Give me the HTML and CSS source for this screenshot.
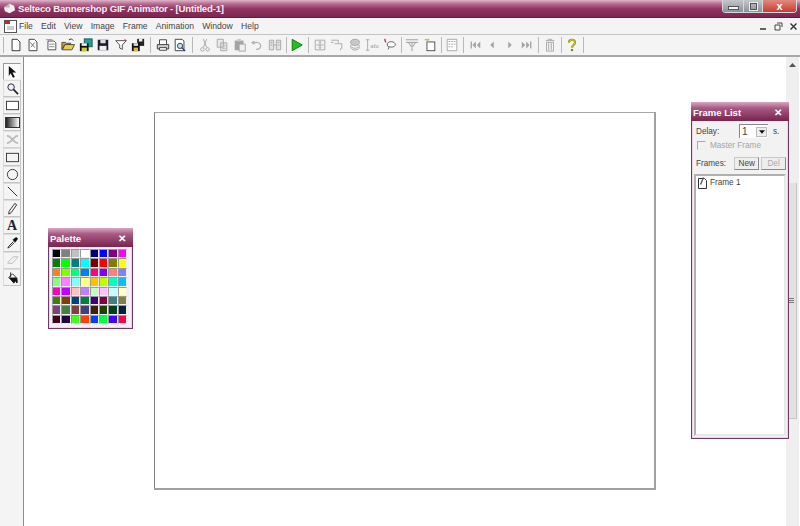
FILE: index.html
```html
<!DOCTYPE html>
<html lang="en">
<head>
  <meta charset="UTF-8" />
  <title>Selteco Bannershop GIF Animator - [Untitled-1]</title>
  <link rel="stylesheet" href="styles.css">
</head>
<body>
<div class="app">

  <div class="titlebar">
    <svg class="app-icon" viewBox="0 0 14 14"><path d="M1 6 L7 2 L12 4 L13 9 L7 12 L2 10 Z" fill="#f4eef0"/><path d="M1 6 L7 2 L7 6 Z" fill="#b9b2b6"/></svg>
    <span class="title-text">Selteco Bannershop GIF Animator - [Untitled-1]</span>
    <div class="win-controls">
      <div class="win-btn win-min"><span class="min-glyph"></span></div>
      <div class="win-btn win-max"><span class="max-glyph"></span></div>
      <div class="win-btn win-close">x</div>
    </div>
  </div>

  <div class="menubar">
    <svg class="doc-icon" viewBox="0 0 15 15"><rect x="1.5" y="1.5" width="12" height="12" fill="#fff" stroke="#555"/><rect x="2" y="2" width="5" height="3" fill="#c22"/><path d="M4 8h7M4 10h7" stroke="#999"/></svg>
    <span class="menu-item">File</span>
    <span class="menu-item">Edit</span>
    <span class="menu-item">View</span>
    <span class="menu-item">Image</span>
    <span class="menu-item">Frame</span>
    <span class="menu-item">Animation</span>
    <span class="menu-item">Window</span>
    <span class="menu-item">Help</span>
    <div class="mdi-controls">
      <svg viewBox="0 0 9 9"><path d="M1 7h6" stroke="#333" stroke-width="1.5"/></svg>
      <svg viewBox="0 0 9 9"><path d="M3 1h5v4M1 3h5v5H1z" fill="none" stroke="#444"/></svg>
      <svg viewBox="0 0 9 9"><path d="M1.5 1.5l6 6M7.5 1.5l-6 6" stroke="#333" stroke-width="1.4"/></svg>
    </div>
  </div>

  <div class="toolbar">
    <span class="sep"></span>
    <span class="tb"><svg viewBox="0 0 16 16"><path d="M3.5 1.5h6l3 3v10h-9z" fill="#fff" stroke="#222"/></svg></span>
    <span class="tb"><svg viewBox="0 0 16 16"><path d="M3.5 1.5h6l3 3v10h-9z" fill="#fff" stroke="#333"/><path d="M5 5l5 6M10 5l-4 5" stroke="#666"/></svg></span>
    <span class="tb"><svg viewBox="0 0 16 16"><path d="M4.5 3.5h7l2 2v8h-9z" fill="#fff" stroke="#444"/><path d="M2.5 2h7M6 7h6M6 10h6" stroke="#777"/></svg></span>
    <span class="tb"><svg viewBox="0 0 16 16"><path d="M1 13V5h4l1 1h5v2H4l-3 5z" fill="#c9a227" stroke="#443"/><path d="M1.5 13.5l3-6h11l-3 6z" fill="#e8cc4a" stroke="#443"/><path d="M9 2l3-1 2 2" fill="none" stroke="#222"/></svg></span>
    <span class="tb"><svg viewBox="0 0 16 16"><rect x="6" y="1" width="9" height="9" fill="#22a090" stroke="#155"/><rect x="1" y="6" width="10" height="9" fill="#111"/><rect x="3" y="6" width="6" height="3" fill="#eee"/><rect x="3" y="11" width="6" height="4" fill="#cc3"/></svg></span>
    <span class="tb"><svg viewBox="0 0 16 16"><rect x="2" y="2" width="12" height="12" fill="#1b1b33"/><rect x="5" y="2" width="6" height="4" fill="#ddd"/><rect x="4" y="9" width="8" height="5" fill="#eee"/></svg></span>
    <span class="tb"><svg viewBox="0 0 16 16"><path d="M2 3h12L9.5 8v5l-3-1.5V8z" fill="#fff" stroke="#444"/><path d="M12 1l2 2" stroke="#c33"/></svg></span>
    <span class="tb"><svg viewBox="0 0 16 16"><rect x="7" y="1" width="8" height="8" fill="#222"/><rect x="9" y="1" width="4" height="3" fill="#eee"/><rect x="1" y="6" width="9" height="9" fill="#111"/><rect x="3" y="6" width="5" height="3" fill="#ddd"/><rect x="3" y="11" width="5" height="4" fill="#db3"/></svg></span>
    <span class="sep"></span>
    <span class="tb"><svg viewBox="0 0 16 16"><path d="M4 7V2h8v5" fill="#fff" stroke="#333"/><path d="M1.5 7.5h13v5h-13z" fill="#ccc" stroke="#333"/><path d="M4 11h8v3H4z" fill="#fff" stroke="#333"/></svg></span>
    <span class="tb"><svg viewBox="0 0 16 16"><path d="M2.5 1.5h8l2 2v11h-10z" fill="#fff" stroke="#333"/><circle cx="8" cy="9" r="3" fill="#bfe3ea" stroke="#235"/><path d="M10 11l4 4" stroke="#235" stroke-width="1.5"/></svg></span>
    <span class="sep"></span>
    <span class="tb dim"><svg viewBox="0 0 16 16"><circle cx="5" cy="13" r="2" fill="none" stroke="#888"/><circle cx="11" cy="13" r="2" fill="none" stroke="#888"/><path d="M6 11l4-10M10 11L6 1" stroke="#888"/></svg></span>
    <span class="tb dim"><svg viewBox="0 0 16 16"><path d="M2.5 1.5h7v9h-7zM6.5 5.5h7v9h-7z" fill="#e4e4e4" stroke="#888"/><path d="M8 8h4M8 10h4M8 12h4" stroke="#aaa"/></svg></span>
    <span class="tb dim"><svg viewBox="0 0 16 16"><rect x="2" y="3" width="10" height="11" fill="#888"/><rect x="5" y="1" width="4" height="3" fill="#bbb"/><rect x="7" y="7" width="7" height="8" fill="#eee" stroke="#888"/></svg></span>
    <span class="tb dim"><svg viewBox="0 0 16 16"><path d="M4 6a5 4 0 1 1 3 7" fill="none" stroke="#999" stroke-width="1.3"/><path d="M1 5l4-2v5z" fill="#999"/></svg></span>
    <span class="tb dim"><svg viewBox="0 0 16 16"><path d="M1.5 2.5h5v11h-5zM9.5 2.5h5v11h-5z" fill="#ddd" stroke="#888"/><path d="M3 5h2M3 8h2M11 5h2M11 8h2M7 8h2" stroke="#777"/></svg></span>
    <span class="sep tight"></span>
    <span class="tb"><svg viewBox="0 0 16 16"><path d="M2.5 1.5L14 8 2.5 14.5z" fill="#1dc41d" stroke="#0a6f0a"/></svg></span>
    <span class="sep tight"></span>
    <span class="tb dim"><svg viewBox="0 0 16 16"><path d="M2.5 2.5h11v11h-11z" fill="#f2f2f2" stroke="#888"/><path d="M8 4v8M4 8h8M6.5 5.5L8 4l1.5 1.5M6.5 10.5L8 12l1.5-1.5" fill="none" stroke="#888"/></svg></span>
    <span class="tb dim"><svg viewBox="0 0 16 16"><path d="M1.5 2.5h8v3M5.5 6.5h8v6M1 5h3M12 14v-2" fill="none" stroke="#888"/></svg></span>
    <span class="tb dim"><svg viewBox="0 0 16 16"><ellipse cx="8" cy="5" rx="5" ry="3.5" fill="#bbb" stroke="#888"/><path d="M3 8c0 5 10 5 10 0M3 10c0 5 10 5 10 0" fill="none" stroke="#888"/></svg></span>
    <span class="tb dim"><svg viewBox="0 0 16 16"><path d="M1 2h4M3 2v12M1 14h4" stroke="#888" fill="none"/><text x="6" y="11" class="abc">abc</text></svg></span>
    <span class="tb"><svg viewBox="0 0 16 16"><path d="M5 6c2-3 9-2 9 1.5S8 11 5 9z" fill="#fff" stroke="#555"/><path d="M7 10l-1 3" stroke="#555"/><path d="M2 1l1 4" stroke="#c22" stroke-width="1.5"/></svg></span>
    <span class="sep tight"></span>
    <span class="tb dim"><svg viewBox="0 0 16 16"><path d="M1 2h14M1 5h14M8 5v10M4 5l3 5M12 5l-3 5" fill="none" stroke="#777"/></svg></span>
    <span class="tb"><svg viewBox="0 0 16 16"><rect x="4.5" y="4.5" width="9" height="10" fill="#fff" stroke="#444"/><path d="M2 2h5" stroke="#888"/><path d="M4 1l2 3M7 1L4 4" stroke="#c8c83c" stroke-width="1.5"/></svg></span>
    <span class="sep tight"></span>
    <span class="tb dim"><svg viewBox="0 0 16 16"><path d="M2.5 1.5h11v13h-11z" fill="#fff" stroke="#888"/><path d="M4 4h8M4 7h8M4 10h5" stroke="#888" stroke-dasharray="2 1"/></svg></span>
    <span class="sep tight"></span>
    <span class="tb dim"><svg viewBox="0 0 16 16"><path d="M3 4h1.5v8H3zM9 4v8L5 8zM14 4v8l-4-4z" fill="#888"/></svg></span>
    <span class="tb dim"><svg viewBox="0 0 16 16"><path d="M10 4v8L6 8z" fill="#888"/></svg></span>
    <span class="tb dim"><svg viewBox="0 0 16 16"><path d="M6 4v8l4-4z" fill="#888"/></svg></span>
    <span class="tb dim"><svg viewBox="0 0 16 16"><path d="M13 4h-1.5v8H13zM7 4v8l4-4zM2 4v8l4-4z" fill="#888"/></svg></span>
    <span class="sep tight"></span>
    <span class="tb dim"><svg viewBox="0 0 16 16"><path d="M3 3h10M6 3V1.5h4V3M4 5h8v10H4zM6.5 6v8M9.5 6v8" fill="none" stroke="#888"/></svg></span>
    <span class="sep tight"></span>
    <span class="tb"><svg viewBox="0 0 16 16"><path d="M4.5 5.5C4.5 1 11.5 1 11.5 5c0 3-3.5 3-3.5 6" fill="none" stroke="#8a8a10" stroke-width="2.4"/><path d="M4.5 5.5C4.5 1 11.5 1 11.5 5c0 3-3.5 3-3.5 6" fill="none" stroke="#e8e020" stroke-width="1"/><rect x="6.7" y="12.5" width="2.6" height="2.5" fill="#8a8a10"/></svg></span>
    <span class="sep tight"></span>
  </div>

  <div class="workspace">
    <div class="toolbox">
      <span class="tool pressed"><svg viewBox="0 0 14 14"><path d="M3 1l8 7H7l2.5 5-2 .7L5 9l-2 3z" fill="#111"/></svg></span>
      <span class="tool"><svg viewBox="0 0 14 14"><circle cx="5.5" cy="5.5" r="3.5" fill="#eef" stroke="#222"/><path d="M8 8l5 5" stroke="#222" stroke-width="1.8"/></svg></span>
      <span class="tool"><svg viewBox="0 0 14 14"><rect x=".5" y="2.5" width="13" height="9" fill="#fff" stroke="#333"/></svg></span>
      <span class="tool"><span class="grad-box"></span></span>
      <span class="tool dim"><svg viewBox="0 0 14 14"><path d="M1 3c3 0 4 2 6 4s3 4 6 4M1 11c3 0 4-2 6-4s3-4 6-4" fill="none" stroke="#aaa" stroke-width="2"/></svg></span>
      <span class="tool"><svg viewBox="0 0 14 14"><rect x=".5" y="2.5" width="13" height="9" fill="none" stroke="#333"/></svg></span>
      <span class="tool"><svg viewBox="0 0 14 14"><circle cx="7" cy="7" r="5.5" fill="none" stroke="#333"/></svg></span>
      <span class="tool"><svg viewBox="0 0 14 14"><path d="M2 2l10 10" stroke="#222"/></svg></span>
      <span class="tool"><svg viewBox="0 0 14 14"><path d="M9.5 1.5l2 1.5-6 8.5-2.5 1.5.3-3z" fill="#fff" stroke="#222"/></svg></span>
      <span class="tool tool-a">A</span>
      <span class="tool"><svg viewBox="0 0 14 14"><path d="M8 6l-5 5-1 2 2-1 5-5" fill="#fff" stroke="#222"/><path d="M7 4l3 3 3-4-2-2z" fill="#111"/></svg></span>
      <span class="tool dim"><svg viewBox="0 0 14 14"><path d="M2 9l6-6h5l-6 7H2z" fill="#f2f2f2" stroke="#aaa"/></svg></span>
      <span class="tool"><svg viewBox="0 0 14 14"><path d="M3 7l4-4 5 5-4 4z" fill="#fff" stroke="#222"/><path d="M5 1.5v5" stroke="#222"/><path d="M3 7h8l1.5 2.5v3.500h-1.500l-.5-2-2 2.500z" fill="#111"/></svg></span>
    </div>

    <div class="canvas-area">
      <div class="artboard"></div>
    </div>

    <div class="scrollbar">
      <svg class="scroll-arrow" viewBox="0 0 7 4"><path d="M3.5 0L7 4H0z" fill="#555"/></svg>
      <div class="scroll-thumb"><span class="grip"></span></div>
    </div>

    <div class="panel palette">
      <div class="panel-title">Palette <span class="panel-close">✕</span></div>
      <div class="swatches">
        <i style="background:#000000"></i><i style="background:#808080"></i><i style="background:#c0c0c0"></i><i style="background:#ffffff"></i><i style="background:#000080"></i><i style="background:#0000ff"></i><i style="background:#800080"></i><i style="background:#ff00ff"></i>
        <i style="background:#008000"></i><i style="background:#00ff00"></i><i style="background:#008080"></i><i style="background:#00ffff"></i><i style="background:#800000"></i><i style="background:#ff0000"></i><i style="background:#808000"></i><i style="background:#ffff00"></i>
        <i style="background:#ff8020"></i><i style="background:#80ff00"></i><i style="background:#00ff80"></i><i style="background:#0080ff"></i><i style="background:#ff0080"></i><i style="background:#8000ff"></i><i style="background:#ff8080"></i><i style="background:#8080ff"></i>
        <i style="background:#80ff80"></i><i style="background:#ff80ff"></i><i style="background:#80ffff"></i><i style="background:#ffff80"></i><i style="background:#ffc000"></i><i style="background:#c0ff00"></i><i style="background:#00ffc0"></i><i style="background:#00c0ff"></i>
        <i style="background:#ff00c0"></i><i style="background:#c000ff"></i><i style="background:#ffc0c0"></i><i style="background:#c080ff"></i><i style="background:#c0ffc0"></i><i style="background:#ffc0ff"></i><i style="background:#c0ffff"></i><i style="background:#ffffc0"></i>
        <i style="background:#408000"></i><i style="background:#804000"></i><i style="background:#004080"></i><i style="background:#008040"></i><i style="background:#400080"></i><i style="background:#800040"></i><i style="background:#408080"></i><i style="background:#808040"></i>
        <i style="background:#804080"></i><i style="background:#408040"></i><i style="background:#804040"></i><i style="background:#404080"></i><i style="background:#402000"></i><i style="background:#204000"></i><i style="background:#004020"></i><i style="background:#002040"></i>
        <i style="background:#400020"></i><i style="background:#200040"></i><i style="background:#40ff20"></i><i style="background:#ff4000"></i><i style="background:#0040ff"></i><i style="background:#00ff40"></i><i style="background:#4000ff"></i><i style="background:#ff0040"></i>
      </div>
    </div>

    <div class="panel frame-list">
      <div class="panel-title">Frame List <span class="panel-close">✕</span></div>
      <div class="frame-body">
        <div class="row delay-row">
          <span class="delay-label">Delay:</span>
          <span class="combo">1<span class="combo-btn"><svg viewBox="0 0 7 4"><path d="M0 0h7L3.5 4z" fill="#111"/></svg></span></span>
          <span>s.</span>
        </div>
        <div class="row master-row">
          <span class="checkbox"></span>
          <span>Master Frame</span>
        </div>
        <div class="row frames-row">
          <span class="frames-label">Frames:</span>
          <span class="btn">New</span>
          <span class="btn disabled">Del</span>
        </div>
        <div class="list">
          <div class="list-item">
            <svg viewBox="0 0 11 13"><path d="M1.5 2.5h6l2 2v8h-8z" fill="#fff" stroke="#333"/><path d="M6 1l-3 7 1 1 3-7z" fill="#555"/></svg>
            <span>Frame 1</span>
          </div>
        </div>
      </div>
    </div>
  </div>

</div>
</body>
</html>
```

FILE: styles.css
```css
body, html {
  margin: 0;
  padding: 0;
  height: 100%;
  overflow: hidden;
  background: #fff;
  font-family: "Liberation Sans", Arial, sans-serif;
  font-size: 8.6px;
  color: #444;
}

.app {
  width: 800px;
  height: 526px;
  display: flex;
  flex-direction: column;
}

/* title bar */
.titlebar {
  height: 18px;
  flex: none;
  display: flex;
  align-items: center;
  padding-left: 3px;
  background: linear-gradient(#e0b4c8 0, #b46a90 4px, #8e3460 9px, #7c2850 17px);
  border-bottom: 1px solid #5d1e3c;
  box-sizing: border-box;
}

.app-icon {
  width: 13px;
  height: 13px;
  margin-right: 2px;
}

.title-text {
  color: #f6eef2;
  font-weight: bold;
  font-size: 9.6px;
  letter-spacing: -0.2px;
}

.win-controls {
  margin-left: auto;
  margin-right: 3px;
  align-self: flex-start;
  display: flex;
  height: 12px;
  border: 1px solid #d8d8dc;
  border-top: none;
  border-radius: 0 0 4px 4px;
  overflow: hidden;
}

.win-btn {
  display: flex;
  align-items: center;
  justify-content: center;
  background: linear-gradient(#c4c8cc, #8c9098);
  border-right: 1px solid #d8d8dc;
}

.win-min { width: 20px; }
.win-max { width: 18px; }

.min-glyph {
  width: 9px;
  height: 2px;
  margin-top: 3px;
  background: #f4f4f4;
  border: 1px solid #555;
}

.max-glyph {
  width: 5px;
  height: 5px;
  background: transparent;
  border: 1px solid #555;
  outline: 1px solid #eee;
}

.win-close {
  width: 33px;
  border: none;
  color: #fff;
  font-weight: bold;
  font-size: 11px;
  background: linear-gradient(#e08a80, #c83c30);
}

/* menu */
.menubar {
  height: 17px;
  flex: none;
  box-sizing: border-box;
  display: flex;
  align-items: center;
  gap: 8.2px;
  padding-left: 3px;
  background: #f4f4f4;
  border-bottom: 1px solid #c4c4c4;
}

.doc-icon {
  width: 15px;
  height: 15px;
  margin-right: -7.2px;
}

.mdi-controls {
  margin-left: auto;
  margin-right: 2px;
  display: flex;
  gap: 6px;
}

.mdi-controls svg {
  width: 9px;
  height: 9px;
}

/* toolbar */
.toolbar {
  height: 22px;
  flex: none;
  box-sizing: border-box;
  display: flex;
  align-items: center;
  padding-left: 3px;
  background: #f4f4f4;
  border-bottom: 2px solid #a8a8a8;
}

.sep {
  width: 1px;
  height: 16px;
  margin: 0 3px;
  background: #b8b8b8;
}

.sep:first-child {
  margin-left: 0;
}

.sep.tight {
  margin: 0 2px;
}

.tb {
  width: 17.5px;
  display: flex;
  justify-content: center;
}

.tb svg {
  width: 14px;
  height: 14px;
}

.dim {
  opacity: 0.75;
}

.abc {
  font-family: "Liberation Sans", sans-serif;
  font-size: 7px;
  fill: #888;
}

/* workspace */
.workspace {
  position: relative;
  flex: 1;
  min-height: 0;
  display: flex;
}

.toolbox {
  width: 24px;
  flex: none;
  box-sizing: border-box;
  padding: 5.5px 2px 0 3px;
  background: #f4f4f4;
  border-right: 1px solid #8c8c8c;
  display: flex;
  flex-direction: column;
}

.tool {
  height: 17.2px;
  flex: none;
  box-sizing: border-box;
  display: flex;
  align-items: center;
  justify-content: center;
  border: 1px solid #dcdcdc;
  border-right-color: #c4c4c4;
  border-bottom-color: #c4c4c4;
}

.tool svg {
  width: 13px;
  height: 13px;
}

.tool.pressed {
  background: #fafafa;
  border-color: #999 #eee #eee #999;
}

.tool-a {
  font-family: "Liberation Serif", serif;
  font-weight: bold;
  font-size: 14px;
  color: #222;
}

.grad-box {
  width: 13px;
  height: 9px;
  border: 1px solid #333;
  background: linear-gradient(90deg, #222, #fff);
}

.canvas-area {
  flex: 1;
  padding: 55px 0 0 130px;
  background: #fff;
}

.artboard {
  width: 499px;
  height: 375px;
  background: #fff;
  border-top: 1px solid #a8a8a8;
  border-left: 1px solid #808080;
  box-shadow: 1px 1px 0 1px #a0a0a0;
}

.scrollbar {
  width: 13px;
  flex: none;
  margin-right: 1px;
  padding-top: 6px;
  box-sizing: border-box;
  display: flex;
  flex-direction: column;
  background: #efefef;
}

.scroll-arrow {
  width: 7px;
  height: 4px;
  margin-left: 3px;
}

.scroll-thumb {
  width: 11px;
  height: 236px;
  margin-top: 116px;
  display: flex;
  align-items: center;
  justify-content: center;
  background: #e2e2e2;
  border-right: 1px solid #c4c4c4;
  border-bottom: 1px solid #c8c8c8;
  box-sizing: border-box;
}

.grip {
  width: 6px;
  height: 5px;
  background: repeating-linear-gradient(#777 0, #777 1px, #e2e2e2 1px, #e2e2e2 2px);
}

/* floating panels */
.panel {
  position: absolute;
  box-sizing: border-box;
  background: #f6eef5;
  border: 1px solid #6e3a68;
  border-top: none;
  box-shadow: inset 0 0 0 1px #ecd5e8;
  display: flex;
  flex-direction: column;
}

.panel-title {
  height: 19px;
  flex: none;
  display: flex;
  align-items: center;
  justify-content: space-between;
  padding: 1px 7px 0 2px;
  margin: 0 -1px;
  background: linear-gradient(#d9a8c0 0, #a85a84 6px, #7c2850 18px);
  color: #fff;
  font-weight: bold;
  font-size: 9.5px;
  box-sizing: border-box;
}

.panel-close {
  font-size: 10px;
}

.palette {
  left: 48px;
  top: 171px;
  width: 85px;
  height: 101px;
}

.swatches {
  width: 76px;
  margin: 2px 0 0 3px;
  display: grid;
  grid-template-columns: repeat(8, 9.4px);
  grid-auto-rows: 9.4px;
}

.swatches i {
  border: 1px solid #c8c0c8;
  border-color: #999 #eee #eee #999;
}

.frame-list {
  left: 691px;
  top: 45px;
  width: 98px;
  height: 337px;
}

.frame-body {
  flex: 1;
  min-height: 0;
  display: flex;
  flex-direction: column;
  padding: 3px 1px 1px 1px;
  margin: 0 1px 1px 0;
  background: #f2f2f2;
  border-left: 1px solid #ead8e8;
  font-size: 8.2px;
}

.row {
  display: flex;
  align-items: center;
}

.delay-row {
  height: 14px;
  gap: 5px;
}

.delay-label {
  width: 38px;
  padding-left: 2px;
}

.combo {
  width: 29px;
  height: 14px;
  box-sizing: border-box;
  display: flex;
  align-items: center;
  justify-content: space-between;
  padding: 0 1px 0 2px;
  font-size: 10px;
  background: #fff;
  border-left: 1px solid #888;
  border-top: 1px solid #888;
}

.combo-btn {
  width: 11px;
  height: 10px;
  display: flex;
  align-items: center;
  justify-content: center;
  background: #eee;
  border: 1px solid #bbb;
  box-sizing: border-box;
}

.combo-btn svg {
  width: 6px;
  height: 4px;
}

.master-row {
  height: 12px;
  margin-top: 1px;
  padding-left: 3px;
  gap: 4px;
  color: #a4a4a4;
}

.checkbox {
  width: 9px;
  height: 9px;
  box-sizing: border-box;
  border: 1px solid #aaa;
  border-right-color: #eee;
  border-bottom-color: #eee;
}

.frames-row {
  height: 14px;
  margin-top: 5px;
  gap: 2px;
}

.frames-label {
  width: 36.5px;
  padding-left: 2px;
}

.btn {
  width: 25px;
  height: 13px;
  box-sizing: border-box;
  display: flex;
  align-items: center;
  justify-content: center;
  background: #eeeeee;
  border: 1px solid #c8c8c8;
  border-right-color: #888;
  border-bottom-color: #888;
}

.btn.disabled {
  color: #aaa;
}

.list {
  flex: 1;
  margin-top: 4px;
  background: #fff;
  border: 2px solid #b0b0b0;
  border-right-color: #e8e8e8;
  border-bottom-color: #e8e8e8;
}

.list-item {
  display: flex;
  align-items: center;
  gap: 2px;
  padding-left: 1px;
}

.list-item svg {
  width: 11px;
  height: 13px;
}
```
